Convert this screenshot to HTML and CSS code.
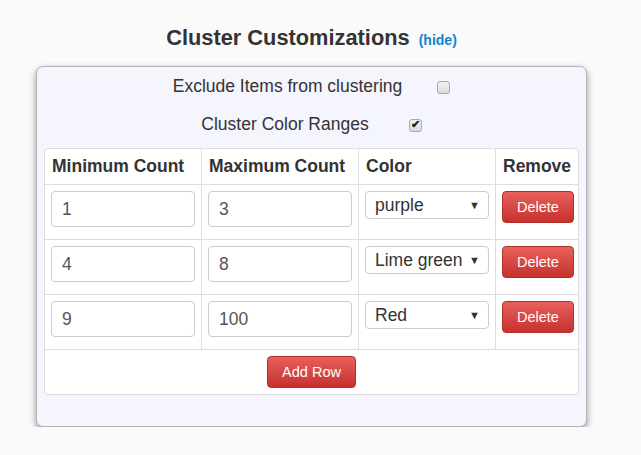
FILE: index.html
```html
<!DOCTYPE html>
<html lang="en">
<head>
    <meta charset="UTF-8">
    <meta name="viewport" content="width=device-width, initial-scale=1.0">
    <title>Cluster Customizations</title>
    <link rel="stylesheet" href="styles.css">
</head>
<body>
    <div class="cluster-wrap">
        <h2 class="cluster-title">Cluster Customizations <a href="#" class="hide-link">(hide)</a></h2>

        <div class="cluster-panel">
            <div class="option-row">
                <label for="excludeItems">Exclude Items from clustering</label>
                <input type="checkbox" id="excludeItems" class="check">
            </div>
            <div class="option-row option-row-wide">
                <label for="colorRanges">Cluster Color Ranges</label>
                <input type="checkbox" id="colorRanges" class="check" checked>
            </div>

            <table class="range-table">
                <thead>
                    <tr>
                        <th class="col-min">Minimum Count</th>
                        <th class="col-max">Maximum Count</th>
                        <th class="col-color">Color</th>
                        <th class="col-remove">Remove</th>
                    </tr>
                </thead>
                <tbody>
                    <tr>
                        <td><input type="text" class="count-input" value="1"></td>
                        <td><input type="text" class="count-input" value="3"></td>
                        <td>
                            <div class="select-wrap">
                                <select class="color-select">
                                    <option selected>purple</option>
                                    <option>Lime green</option>
                                    <option>Red</option>
                                </select>
                            </div>
                        </td>
                        <td><button class="btn-danger">Delete</button></td>
                    </tr>
                    <tr>
                        <td><input type="text" class="count-input" value="4"></td>
                        <td><input type="text" class="count-input" value="8"></td>
                        <td>
                            <div class="select-wrap">
                                <select class="color-select">
                                    <option>purple</option>
                                    <option selected>Lime green</option>
                                    <option>Red</option>
                                </select>
                            </div>
                        </td>
                        <td><button class="btn-danger">Delete</button></td>
                    </tr>
                    <tr>
                        <td><input type="text" class="count-input" value="9"></td>
                        <td><input type="text" class="count-input" value="100"></td>
                        <td>
                            <div class="select-wrap">
                                <select class="color-select">
                                    <option>purple</option>
                                    <option>Lime green</option>
                                    <option selected>Red</option>
                                </select>
                            </div>
                        </td>
                        <td><button class="btn-danger">Delete</button></td>
                    </tr>
                </tbody>
                <tfoot>
                    <tr>
                        <td colspan="4" class="add-cell"><button class="btn-danger">Add Row</button></td>
                    </tr>
                </tfoot>
            </table>
        </div>
    </div>
</body>
</html>
```

FILE: styles.css
```css
body {
    font-family: 'Liberation Sans', Arial, sans-serif;
    margin: 0;
    padding: 0;
    background-color: #fafafa;
    color: #333;
}
.cluster-wrap {
    width: 551px;
    margin-left: 36px;
}
.cluster-title {
    margin: 25px 0 16px;
    font-size: 21.8px;
    line-height: 25px;
    text-align: center;
}
.cluster-title .hide-link {
    margin-left: 3px;
    font-size: 14px;
    line-height: 1;
    color: #0d84cf;
    text-decoration: none;
}
.cluster-panel {
    background-color: #f4f5fd;
    border: 1px solid #b4b4b8;
    border-radius: 7px;
    box-shadow: 0 3px 7px rgba(0, 0, 0, 0.4);
    padding: 0 7px 31px;
}
.option-row {
    display: flex;
    justify-content: center;
    align-items: center;
    height: 38px;
    font-size: 17.5px;
}
.option-row .check {
    margin: 2px 0 0 35px;
}
.option-row-wide .check {
    margin-left: 40px;
}
.check {
    appearance: none;
    -webkit-appearance: none;
    width: 13px;
    height: 13px;
    border: 1px solid #a9a9a9;
    border-radius: 3px;
    background: linear-gradient(#f1f1f1, #dcdcdc);
    position: relative;
}
.check:checked::after {
    content: "\2714";
    position: absolute;
    left: 1px;
    top: -2px;
    font-size: 11px;
    font-weight: bold;
    color: #222;
}
.range-table {
    width: 100%;
    table-layout: fixed;
    margin-top: 5px;
    background-color: #fff;
    border: 1px solid #ddd;
    border-radius: 4px;
    border-spacing: 0;
    font-size: 17.5px;
}
.range-table th {
    text-align: left;
    padding: 8px 7px;
    height: 19px;
    line-height: 19px;
    border-left: 1px solid #ddd;
}
.range-table td {
    padding: 6px 6px 12px;
    vertical-align: top;
    border-top: 1px solid #ddd;
    border-left: 1px solid #ddd;
}
.range-table th:first-child,
.range-table td:first-child {
    border-left: none;
}
.col-min {
    width: 142px;
}
.col-max {
    width: 142px;
}
.col-color {
    width: 122px;
}
.count-input {
    display: block;
    width: 100%;
    height: 36px;
    box-sizing: border-box;
    padding: 6px 10px;
    font-family: inherit;
    font-size: 17.5px;
    color: #555;
    border: 1px solid #ccc;
    border-radius: 4px;
}
.select-wrap {
    position: relative;
}
.select-wrap::after {
    content: "\25BC";
    position: absolute;
    right: 9px;
    top: 8px;
    font-size: 11px;
    color: #333;
    pointer-events: none;
}
.color-select {
    appearance: none;
    -webkit-appearance: none;
    display: block;
    width: 100%;
    height: 28px;
    padding: 0 9px;
    font-family: inherit;
    font-size: 17.5px;
    color: #333;
    background-color: #fff;
    border: 1px solid #ccc;
    border-radius: 4px;
}
.btn-danger {
    font-family: inherit;
    font-size: 14.5px;
    line-height: 18px;
    padding: 6px 14px;
    color: #fff;
    background: linear-gradient(#e8605c, #c6322e);
    border: 1px solid #b52d29;
    border-radius: 4px;
    cursor: pointer;
}
.btn-danger:hover {
    background: #c9302c;
}
.range-table .add-cell {
    text-align: center;
    padding: 6px;
}
```
